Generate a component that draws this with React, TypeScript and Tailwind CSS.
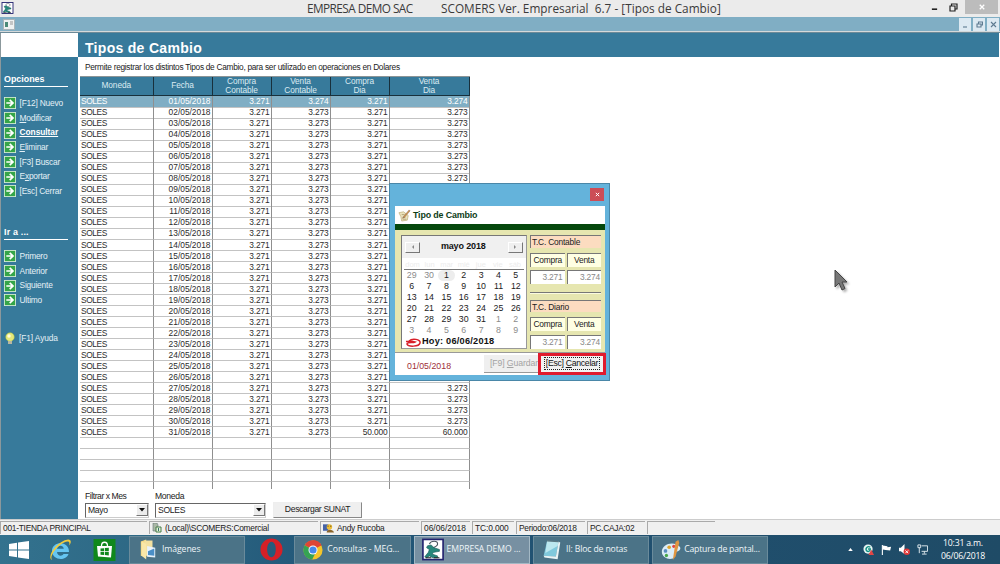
import React from "react";

const cx = (...a: (string | false | undefined)[]) => a.filter(Boolean).join(" ");

function AppIcon({ className }: { className: string }) {
  return (
    <svg viewBox="0 0 24 24" className={className}>
      <rect x="1" y="1" width="22" height="22" fill="#fff" stroke="#23236f" strokeWidth="1.8" />
      <path d="M8 6c2-4 9-4 9 0 0 2-2 3-5 4" fill="none" stroke="#4a5560" strokeWidth="1.2" />
      <path d="M6 8l4-1 3 3 6 2v2l-6 1-2 2 6 2v2h-5l-4-2-3 2-2-1 4-5 1-3-3-2z" fill="#27877b" stroke="#1c5a5c" strokeWidth=".7" />
      <path d="M4 21h6M13 21h6" stroke="#222" strokeWidth="1.2" />
    </svg>
  );
}

function Arrow() {
  return (
    <svg viewBox="0 0 12 12" className="h-3 w-3 shrink-0">
      <rect x=".4" y=".4" width="11.2" height="11.2" fill="#35a548" stroke="#d9f0d5" strokeWidth=".9" />
      <path d="M2.3 6h6.5M5.7 2.8L9 6 5.7 9.2" fill="none" stroke="#fff" strokeWidth="1.7" />
    </svg>
  );
}

function SideItem({ children, bold }: { children: React.ReactNode; bold?: boolean }) {
  return (
    <div className={cx("flex h-[14.7px] items-center gap-[3.5px] pl-[3px] whitespace-nowrap", bold ? "font-bold text-white tracking-[-0.05px]" : "text-[#e4f0f6] tracking-[-0.2px]")}>
      <Arrow />
      <span>{children}</span>
    </div>
  );
}

const heads = [["Moneda"], ["Fecha"], ["Compra", "Contable"], ["Venta", "Contable"], ["Compra", "Dia"], ["Venta", "Dia"]];
const rows: string[][] = Array.from({ length: 36 }, (_, i) => {
  if (i > 30) return ["", "", "", "", "", ""];
  const v = i === 0 ? "3.274" : "3.273";
  return ["SOLES", String(i + 1).padStart(2, "0") + "/05/2018", "3.271", v, i === 30 ? "50.000" : "3.271", i === 30 ? "60.000" : v];
});

function RatesTable() {
  return (
    <div className="ml-[2px] h-[413px] w-[389.5px] shrink-0 overflow-hidden border-t border-[#8c9496]">
      <div className="grid h-[19.8px] grid-cols-[73.5px_59px_59px_59px_59px_80px] bg-[#377a9b]">
        {heads.map((h, i) => (
          <div key={i} className="flex flex-col items-center justify-center border-r border-b border-[#18303c] text-[8.3px] leading-[9px] tracking-[-0.1px] text-[#dcebf2]">
            {h.map((t) => <span key={t}>{t}</span>)}
          </div>
        ))}
      </div>
      {rows.map((r, i) => (
        <div key={i} className={cx("grid h-[11.03px] grid-cols-[73.5px_59px_59px_59px_59px_80px] text-[8.4px] leading-[10.4px]", i === 0 ? "bg-[#80aec4] text-white" : "text-[#2c2c2c]")}>
          {r.map((t, j) => (
            <div key={j} className={cx("border-r border-b border-r-[#8f8f8f] border-b-[#c3c3c3] px-[1px]", j > 0 && "text-right", j > 1 && "tracking-[-0.15px]", j === 0 && "tracking-[-0.4px]")}>{t}</div>
          ))}
        </div>
      ))}
    </div>
  );
}

function Select({ value, className }: { value: string; className: string }) {
  return (
    <div className={cx("flex h-[15px] items-center justify-between border border-t-[#666] border-l-[#666] border-r-[#ccc] border-b-[#ccc] bg-white pl-[2px] text-[8.6px] tracking-[-0.3px]", className)}>
      <span>{value}</span>
      <span className="flex h-[12px] w-[12px] items-center justify-center border border-t-white border-l-white border-r-[#777] border-b-[#777] bg-[#ececec]">
        <svg viewBox="0 0 6 4" className="h-[4px] w-[6px]"><path d="M0 0h6L3 3.5z" fill="#111" /></svg>
      </span>
    </div>
  );
}

const days = [29, 30, ...Array.from({ length: 31 }, (_, i) => i + 1), 1, 2, 3, 4, 5, 6, 7, 8, 9];

function NavButton({ left }: { left?: boolean }) {
  return (
    <span className="flex h-[11px] w-[15px] items-center justify-center border border-t-white border-l-white border-r-[#777] border-b-[#777] bg-[#efefef]">
      <svg viewBox="0 0 4 4" className="h-[4px] w-[4px]"><path d={left ? "M3 0v4L1 2z" : "M1 0v4l2-2z"} fill="#888" /></svg>
    </span>
  );
}

function Calendar() {
  return (
    <div className="h-[113.5px] w-[125.5px] shrink-0 border border-t-[#777] border-l-[#777] border-r-[#999] border-b-[#999] bg-white">
      <div className="flex h-[22px] items-center justify-between bg-[#f0f0f0] pr-[3px] pl-[3px]">
        <NavButton left />
        <span className="pr-[1px] text-[9px] font-bold tracking-[-0.15px] text-[#111]">mayo 2018</span>
        <NavButton />
      </div>
      <div className="mx-[2px] grid h-[12px] grid-cols-7 border-b border-[#777] text-center text-[7.5px] leading-[13px] text-[#ececec]">
        {["dom", "lun", "mar", "mié", "jue", "vie", "sáb"].map((d) => <span key={d}>{d}</span>)}
      </div>
      <div className="mx-[1px] grid auto-rows-[11.1px] grid-cols-7 text-center text-[8.8px] leading-[11.5px]">
        {days.map((d, i) => (
          <span key={i} className={cx(i < 2 || i > 32 ? "text-[#8b8b8b]" : "text-[#1b1b1b]", i === 2 && "rounded-full bg-[#ededed]")}>{d}</span>
        ))}
      </div>
      <div className="flex h-[11px] items-center pl-[2px]">
        <svg viewBox="0 0 18 9" className="h-[9px] w-[18px]"><path d="M5 3C8 0 17 1 16 5c-1 4-12 4-13 1 0-2 6-1 8-2-3-1-6-1-9-.5" fill="none" stroke="#d8202a" strokeWidth="1.5" /></svg>
        <span className="text-[9.2px] font-bold tracking-[0.23px] whitespace-pre text-[#111]">Hoy: 06/06/2018</span>
      </div>
    </div>
  );
}

function Rate({ title }: { title: string }) {
  const inset = "border-t border-l border-[#777]";
  return (
    <div className="w-[71px] text-[8.4px] tracking-[-0.2px] text-[#222]">
      <div className={cx("h-[12.5px] bg-[#fcdcc0] pl-[1px] leading-[12px]", inset)}>{title}</div>
      <div className="mt-[5px] grid h-[14px] grid-cols-2 gap-[2px] text-center leading-[13px]">
        <span className={cx("bg-[#ffffe3]", inset)}>Compra</span>
        <span className={cx("bg-[#ffffe3]", inset)}>Venta</span>
      </div>
      <div className="mt-[3.5px] grid h-[13.5px] grid-cols-2 gap-[2px] text-right leading-[13px] text-[#888]">
        <span className={cx("bg-white pr-[2px]", inset)}>3.271</span>
        <span className={cx("bg-white pr-[1px]", inset)}>3.274</span>
      </div>
    </div>
  );
}

function Dialog() {
  return (
    <div className="absolute top-[183px] left-[389px] h-[198px] w-[221px] border border-[#4a87a8] bg-[#64b3db] pl-[5px]">
      <div className="flex h-[22px] justify-end pt-[4px] pr-[5px]">
        <span className="flex h-[13px] w-[14px] items-center justify-center bg-[#cc4d56]">
          <svg viewBox="0 0 6 6" className="h-[5px] w-[5px]"><path d="M1 1l4 4M5 1L1 5" stroke="#fff" strokeWidth="1.2" /></svg>
        </span>
      </div>
      <div className="w-[210px]">
        <div className="flex h-[18px] items-center gap-[2px] bg-white pl-[3px]">
          <svg viewBox="0 0 14 14" className="h-[13px] w-[13px]">
            <path d="M1 4l5-1 5 4-1 5-6 1-1-5z" fill="#ece3bd" stroke="#b9aa72" strokeWidth=".7" />
            <path d="M4 6h3M5 9h3M5 11h4" stroke="#998b5a" strokeWidth=".7" />
            <path d="M12 1L6 8l-1 2 2-1 6-7z" fill="#d99a3d" stroke="#755" strokeWidth=".5" />
          </svg>
          <span className="pt-[2px] text-[8.9px] font-bold tracking-[-0.15px] text-[#0d3d17]">Tipo de Cambio</span>
        </div>
        <div className="h-[6px] bg-[#05470d]" />
        <div className="flex h-[122px] gap-[3.5px] bg-[#e6e6b0] pt-[5px] pl-[6px]">
          <Calendar />
          <div className="flex flex-col">
            <Rate title="T.C. Contable" />
            <div className="mt-[8px] mb-[6px] h-[2px] border-t border-[#777] bg-[#fafae0]" />
            <Rate title="T.C. Diario" />
          </div>
        </div>
        <div className="flex h-[22.5px] items-center border-t border-[#999] bg-white">
          <span className="w-[89px] shrink-0 pt-[5px] pl-[12px] text-[8.8px] text-[#a03038]">01/05/2018</span>
          <span className="flex h-[18px] w-[56px] shrink-0 items-center justify-center border-r border-b border-[#999] bg-[#efefef] pl-[5px] text-[8.7px] tracking-[-0.1px] whitespace-nowrap text-[#a3a3a3]"><span>[F9] <u>G</u>uardar</span></span>
          <span className="relative -left-[2px] flex h-[22px] w-[68px] shrink-0 items-center justify-center border-[3px] border-[#e01b2d] bg-[#f2f2f2]">
            <span className="flex h-[13px] w-[56px] items-center justify-center border border-dotted border-[#222] text-[8.7px] tracking-[-0.3px] whitespace-nowrap text-[#111]"><span>[Esc] <u>C</u>ancelar</span></span>
          </span>
        </div>
      </div>
    </div>
  );
}

function Status({ w, children }: { w: string; children?: React.ReactNode }) {
  return <div className={cx("mr-[2px] flex h-[13px] shrink-0 items-center gap-[3px] border-t border-l border-[#aaa] pl-[2px] whitespace-nowrap", w)}>{children}</div>;
}

function Task({ icon, label, active, pad }: { icon: React.ReactNode; label: string; active?: boolean; pad: string }) {
  return (
    <div className={cx("mr-[3px] flex h-[28px] w-[116.3px] shrink-0 items-center border text-[8.7px] whitespace-nowrap text-[#eef5f8]", active ? "border-[#a3b8c4] bg-[#7790a2]" : "border-[#6a8b9b] bg-[#4b7387]")}>
      <span className="ml-[7px] flex w-[22px] shrink-0 justify-center">{icon}</span>
      <span className={pad}>{label}</span>
    </div>
  );
}

function Taskbar() {
  return (
    <div className="flex h-[29px] items-center bg-[linear-gradient(90deg,#33728e_0%,#2b6481_20%,#23597a_30%,#205070_60%,#1f4b66_100%)] font-['Open_Sans','Noto_Sans',sans-serif]">
      <div className="flex w-[129px] shrink-0 items-center">
        <svg viewBox="0 0 20 18" className="ml-[9px] h-[18px] w-[20px]"><path d="M0 3l8-1.2v6.7H0zM9 1.6L20 0v8.500H9zM0 9.500h8v6.700L0 15zM9 9.500h11V18L9 16.400z" fill="#fff" /></svg>
        <svg viewBox="0 0 24 24" className="ml-[19px] h-[24px] w-[24px]">
          <path d="M21 14H9c.4 4.200 5 4.800 6.500 2H20.500C18 23.500 4.200 22.800 4 12.800 4 2.700 21.500 2.300 21 14zM9 10.700h6.800c-.4-4-6.200-4-6.800 0z" fill="#66c6f2" />
          <path d="M4 22C-2 19 9 3 20 1.500c4-.3 3 4 1 6 1.500-4-1-5-5-3C9 8 1 18 4 22z" fill="#f4cb3c" />
        </svg>
        <svg viewBox="0 0 22 22" className="ml-[21px] h-[22px] w-[23px]">
          <rect width="22" height="22" fill="#10881c" />
          <path d="M3.500 7h15l-1 11.500-13-1z" fill="#fff" />
          <path d="M8 7c0-5 6-5 6 0" fill="none" stroke="#fff" strokeWidth="1.300" />
          <path d="M7 9.500l3.500-.3v3H7zM11.300 9.100l4-.3v3.400h-4zM7 13h3.500v3L7 15.700zM11.300 13h4v3.400l-4-.3z" fill="#10881c" />
        </svg>
      </div>
      <Task pad="ml-[3px] tracking-[-0.1px]" label="Imágenes" icon={
        <svg viewBox="0 0 20 24" className="h-[23px] w-[18px]">
          <path d="M2 3l6-2v20l-6-2z" fill="#f6dc86" /><path d="M6 2h9v17H6z" fill="#f3e1a0" /><path d="M9 8l9 2v11l-9-1z" fill="#e8f2fa" /><path d="M10 14l7-3v8l-7-1z" fill="#4a8fc7" /><path d="M3 3l5 3v17l-5-4z" fill="#f9e8a9" />
        </svg>} />
      <div className="flex w-[46px] shrink-0 justify-center">
        <svg viewBox="0 0 24 24" className="h-[23px] w-[23px]"><path fillRule="evenodd" d="M12 .5a11.500 11.500 0 100 23 11.500 11.500 0 000-23zm0 3.500c6 0 6 16 0 16S6 4 12 4z" fill="#d62027" /></svg>
      </div>
      <Task pad="ml-[3px] tracking-[-0.05px]" label="Consultas - MEG..." icon={
        <svg viewBox="0 0 24 24" className="h-[20px] w-[20px]">
          <circle cx="12" cy="12" r="11.500" fill="#f4c52a" /><path d="M12 12L2 6.200a11.500 11.500 0 0120.200 0z" fill="#de4535" /><path d="M12 12L2 6.200A11.500 11.500 0 0011 23.500l4.500-9z" fill="#35a353" /><path d="M12 .5A11.500 11.500 0 0122.200 6.500H12z" fill="#de4535" /><circle cx="12" cy="12" r="5.400" fill="#fff" /><circle cx="12" cy="12" r="4.300" fill="#4688ea" />
        </svg>} />
      <Task active pad="ml-[3px] tracking-[-0.1px]" label="EMPRESA DEMO ..." icon={<AppIcon className="h-[23px] w-[22px]" />} />
      <Task pad="ml-[3px] tracking-[-0.15px]" label="II: Bloc de notas" icon={
        <svg viewBox="0 0 22 24" className="h-[21px] w-[21px]"><path d="M6 2l13 1-3 17-14-1z" fill="#80c9dc" /><path d="M6 2l13 1-1 5L4 16z" fill="#bce8ef" /><path d="M2 19l14 1 3-17 2 1-3 19-15-2z" fill="#e9f4f5" /><path d="M6 2l13 1" stroke="#5c7882" strokeWidth="1.500" /></svg>} />
      <Task pad="ml-[2px] tracking-[-0.2px]" label="Captura de pantal..." icon={
        <svg viewBox="0 0 24 24" className="h-[22px] w-[22px]"><path d="M2 14C2 7 11 3 18 6c7 3 4 7 0 8-3 1-1 3-2 5-2 5-14 3-14-5z" fill="#dbedf7" /><circle cx="6" cy="13" r="2" fill="#5a8ec0" /><circle cx="10" cy="9" r="2" fill="#e1a42c" /><circle cx="7" cy="18" r="1.800" fill="#47a84a" /><circle cx="15" cy="8" r="1.700" fill="#d44" /><path d="M20 1l-3 2-3 20 3-4 4-15z" fill="#df9540" /></svg>} />
      <div className="ml-auto flex shrink-0 items-center gap-[7px] pr-[15px] text-white">
        <svg viewBox="0 0 6 4" className="mr-[3px] h-[3px] w-[5px]"><path d="M0 4h6L3 0z" fill="#fff" /></svg>
        <svg viewBox="0 0 12 12" className="h-[11px] w-[11px]"><circle cx="5.500" cy="5.500" r="5" fill="#e8f6f4" /><path d="M8 3.500C5 1.500 2 5 4 7.500c2 1.500 4 0 4-2H5.500" fill="none" stroke="#129083" strokeWidth="1.500" /><path d="M9 6l3 6H6z" fill="#e14646" /></svg>
        <svg viewBox="0 0 12 12" className="h-[11px] w-[11px]"><path d="M1.500 1v11" stroke="#fff" strokeWidth="1.200" /><path d="M2 1.500l5 1v1l4-.5-1 4-5-.5-3-.5z" fill="#fff" /></svg>
        <svg viewBox="0 0 12 12" className="h-[11px] w-[11px]"><path d="M0 4h2l4-4v11L2 8H0z" fill="#fff" /><circle cx="8.500" cy="8.500" r="3.500" fill="#e03737" /><path d="M7 7l3 3M10 7l-3 3" stroke="#fff" /></svg>
        <svg viewBox="0 0 12 12" className="mr-[6px] h-[11px] w-[11px]"><path d="M5 2h6.500v6H5M8 8v2.500M5.500 11h5M1 1v3h3V1zM2.500 4v6" fill="none" stroke="#e5eef2" /></svg>
        <div className="text-center text-[8.700px] leading-[12.500px] tracking-[-0.200px]"><div>10:31 a.m.</div><div>06/06/2018</div></div>
      </div>
    </div>
  );
}

export default function App() {
  return (
    <div className="relative flex h-[564px] w-[1000px] flex-col overflow-hidden bg-white font-['Liberation_Sans',Arial,sans-serif] text-[8.6px] text-[#222]">
      <div className="flex h-[17px] shrink-0 items-start bg-[#ebebeb] pl-[1px]">
        <AppIcon className="mt-[2px] h-[12px] w-[13px]" />
        <span className="ml-[293px] w-[134px] text-[11.8px] leading-[16px] tracking-[-0.55px] whitespace-nowrap text-[#3a3a3a] font-['Open_Sans','Noto_Sans',sans-serif]">EMPRESA DEMO SAC</span>
        <span className="text-[11.8px] leading-[16px] tracking-[0.01px] whitespace-pre text-[#3a3a3a] font-['Open_Sans','Noto_Sans',sans-serif]">SCOMERS Ver. Empresarial  6.7 - [Tipos de Cambio]</span>
        <div className="ml-auto flex items-center">
          <svg viewBox="0 0 8 8" className="mr-[11px] h-[8px] w-[7px]"><path d="M1 6.500h6" stroke="#222" strokeWidth="1.800" /></svg>
          <svg viewBox="0 0 9 9" className="mr-[7px] h-[9px] w-[9px]"><path d="M1 3h5v5H1zM2.500 3V1h5.500v5H6" fill="none" stroke="#222" strokeWidth="1.200" /></svg>
          <span className="mr-[2px] flex h-[14px] w-[33px] items-center justify-center bg-[#bcbcbc]"><svg viewBox="0 0 8 8" className="h-[6px] w-[6px]"><path d="M1 1l6 6M7 1L1 7" stroke="#fff" strokeWidth="1.700" /></svg></span>
        </div>
      </div>
      <div className="flex h-[14px] shrink-0 items-center bg-[#80aec4] pl-[3px]">
        <svg viewBox="0 0 12 11" className="h-[11px] w-[12px]"><rect x=".5" y=".5" width="11" height="10" fill="#eef2f2" stroke="#a9b5b9" /><path d="M2 3h3v5H2z" fill="#4a8a78" /><path d="M7 3h3M7 5h3" stroke="#999" /></svg>
        <div className="ml-auto flex gap-[2px] pr-[1px]">
          {["M1 6h4", "M1 3h4v3H1zM2.500 3V1h4v3H5", "M1 1l5 5M6 1L1 6"].map((d) => (
            <span key={d} className="flex h-[13px] w-[12px] items-center justify-center bg-[#dce9f2]"><svg viewBox="0 0 7 7" className="h-[7px] w-[7px]"><path d={d} fill="none" stroke="#5e7b91" strokeWidth="1.100" /></svg></span>
          ))}
        </div>
      </div>
      <div className="h-[2px] shrink-0 border-t border-[#d5d9da] bg-[#6c8a98]" />
      <div className="flex h-[486px] shrink-0 border-l border-[#8b989c]">
        <aside className="w-[77px] shrink-0 bg-[#377a9b] text-[8.400px] text-white">
          <div className="h-[24px] bg-white" />
          <div className="mt-[16px] ml-[3px] h-[14px] w-[64px] border-b border-white text-[8.900px] font-bold">Opciones</div>
          <div className="mt-[9px]">
            <SideItem>[F12] Nuevo</SideItem>
            <SideItem><u>M</u>odificar</SideItem>
            <SideItem bold><u>Consultar</u></SideItem>
            <SideItem><u>E</u>liminar</SideItem>
            <SideItem>[F3] Buscar</SideItem>
            <SideItem>E<u>x</u>portar</SideItem>
            <SideItem>[Esc] Cerrar</SideItem>
          </div>
          <div className="mt-[27px] ml-[3px] h-[14.500px] w-[64px] border-b border-white text-[8.900px] font-bold tracking-[0.200px]">Ir a ...</div>
          <div className="mt-[8.500px]">
            <SideItem>Primero</SideItem>
            <SideItem>Anterior</SideItem>
            <SideItem>Siguiente</SideItem>
            <SideItem>Ultimo</SideItem>
          </div>
          <div className="mt-[24px] flex h-[14px] items-center gap-[4px] pl-[4px] tracking-[-0.100px] text-[#e4f0f6]">
            <svg viewBox="0 0 10 13" className="h-[13px] w-[10px]"><circle cx="5" cy="5" r="4.300" fill="#e5e879" stroke="#a8b840" strokeWidth=".5" /><path d="M3 9h4v3H3z" fill="#b7b7a1" /><circle cx="4" cy="4" r="1.700" fill="#fffde0" /></svg>
            <span>[F1] Ayuda</span>
          </div>
        </aside>
        <main className="flex min-w-0 flex-1 flex-col">
          <div className="mr-[1px] flex h-[23.500px] shrink-0 items-center bg-[#377a9b] pt-[6px] pl-[7px] text-[14px] leading-[16px] font-bold tracking-[0.300px] text-white">Tipos de Cambio</div>
          <div className="h-[19px] shrink-0 pt-[4.500px] pl-[7px] text-[8.300px] tracking-[-0.280px] whitespace-nowrap">Permite registrar los distintos Tipos de Cambio, para ser utilizado en operaciones en Dolares</div>
          <RatesTable />
          <div className="flex pt-[2.500px] pl-[7px]">
            <div className="w-[70px]"><div className="h-[11.500px] leading-[11px] tracking-[-0.450px]">Filtrar x Mes</div><Select value="Mayo" className="w-[64px]" /></div>
            <div className="w-[118px]"><div className="h-[11.500px] leading-[11px] tracking-[-0.300px]">Moneda</div><Select value="SOLES" className="w-[111px]" /></div>
            <button className="mt-[11px] h-[16px] w-[89px] border border-t-[#eee] border-l-[#eee] border-r-[#888] border-b-[#888] bg-[#efefef] pb-[2px] text-[8.600px] tracking-[-0.350px]">Descargar SUNAT</button>
          </div>
        </main>
      </div>
      <div className="flex h-[16px] shrink-0 items-end border-t border-[#ccc] bg-[#f0f0f0] pb-[1px] text-[8.400px] tracking-[-0.260px]">
        <Status w="w-[147px]">001-TIENDA PRINCIPAL</Status>
        <Status w="w-[169px]">
          <svg viewBox="0 0 10 10" className="h-[10px] w-[10px]"><path d="M1 0h4l1 2v6H1z" fill="#aab8a6" stroke="#677" strokeWidth=".6" /><path d="M4 4h5v5H4z" fill="#e5f0db" stroke="#467d46" /><path d="M6.500 5v3" stroke="#376" /></svg>
          (Local)\SCOMERS:Comercial
        </Status>
        <Status w="w-[99px]">
          <svg viewBox="0 0 12 10" className="h-[10px] w-[11px]"><rect y="1" width="6" height="7" fill="#4562a5" /><circle cx="7" cy="4" r="3" fill="#edbd35" /><path d="M4 10c0-4 7-4 8 0z" fill="#8a652b" /><path d="M5 3h1M8 3h1" stroke="#222" /></svg>
          Andy Rucoba
        </Status>
        <Status w="w-[49px] tracking-[0px]">06/06/2018</Status>
        <Status w="w-[42px] tracking-[-0.1px]">TC:0.000</Status>
        <Status w="w-[69px]">Periodo:06/2018</Status>
        <Status w="w-[58px]">PC.CAJA:02</Status>
        <Status w="w-[68px]" />
      </div>
      <Taskbar />
      <Dialog />
      <svg viewBox="0 0 20 26" className="absolute top-[268px] left-[832px] h-[26px] w-[20px] drop-shadow-[2px_2px_1px_rgba(0,0,0,0.3)]"><path d="M3 2v17l4-4 3 7 3-1.500-3-6.500h5z" fill="#777" stroke="#444" strokeWidth="1" /></svg>
    </div>
  );
}
